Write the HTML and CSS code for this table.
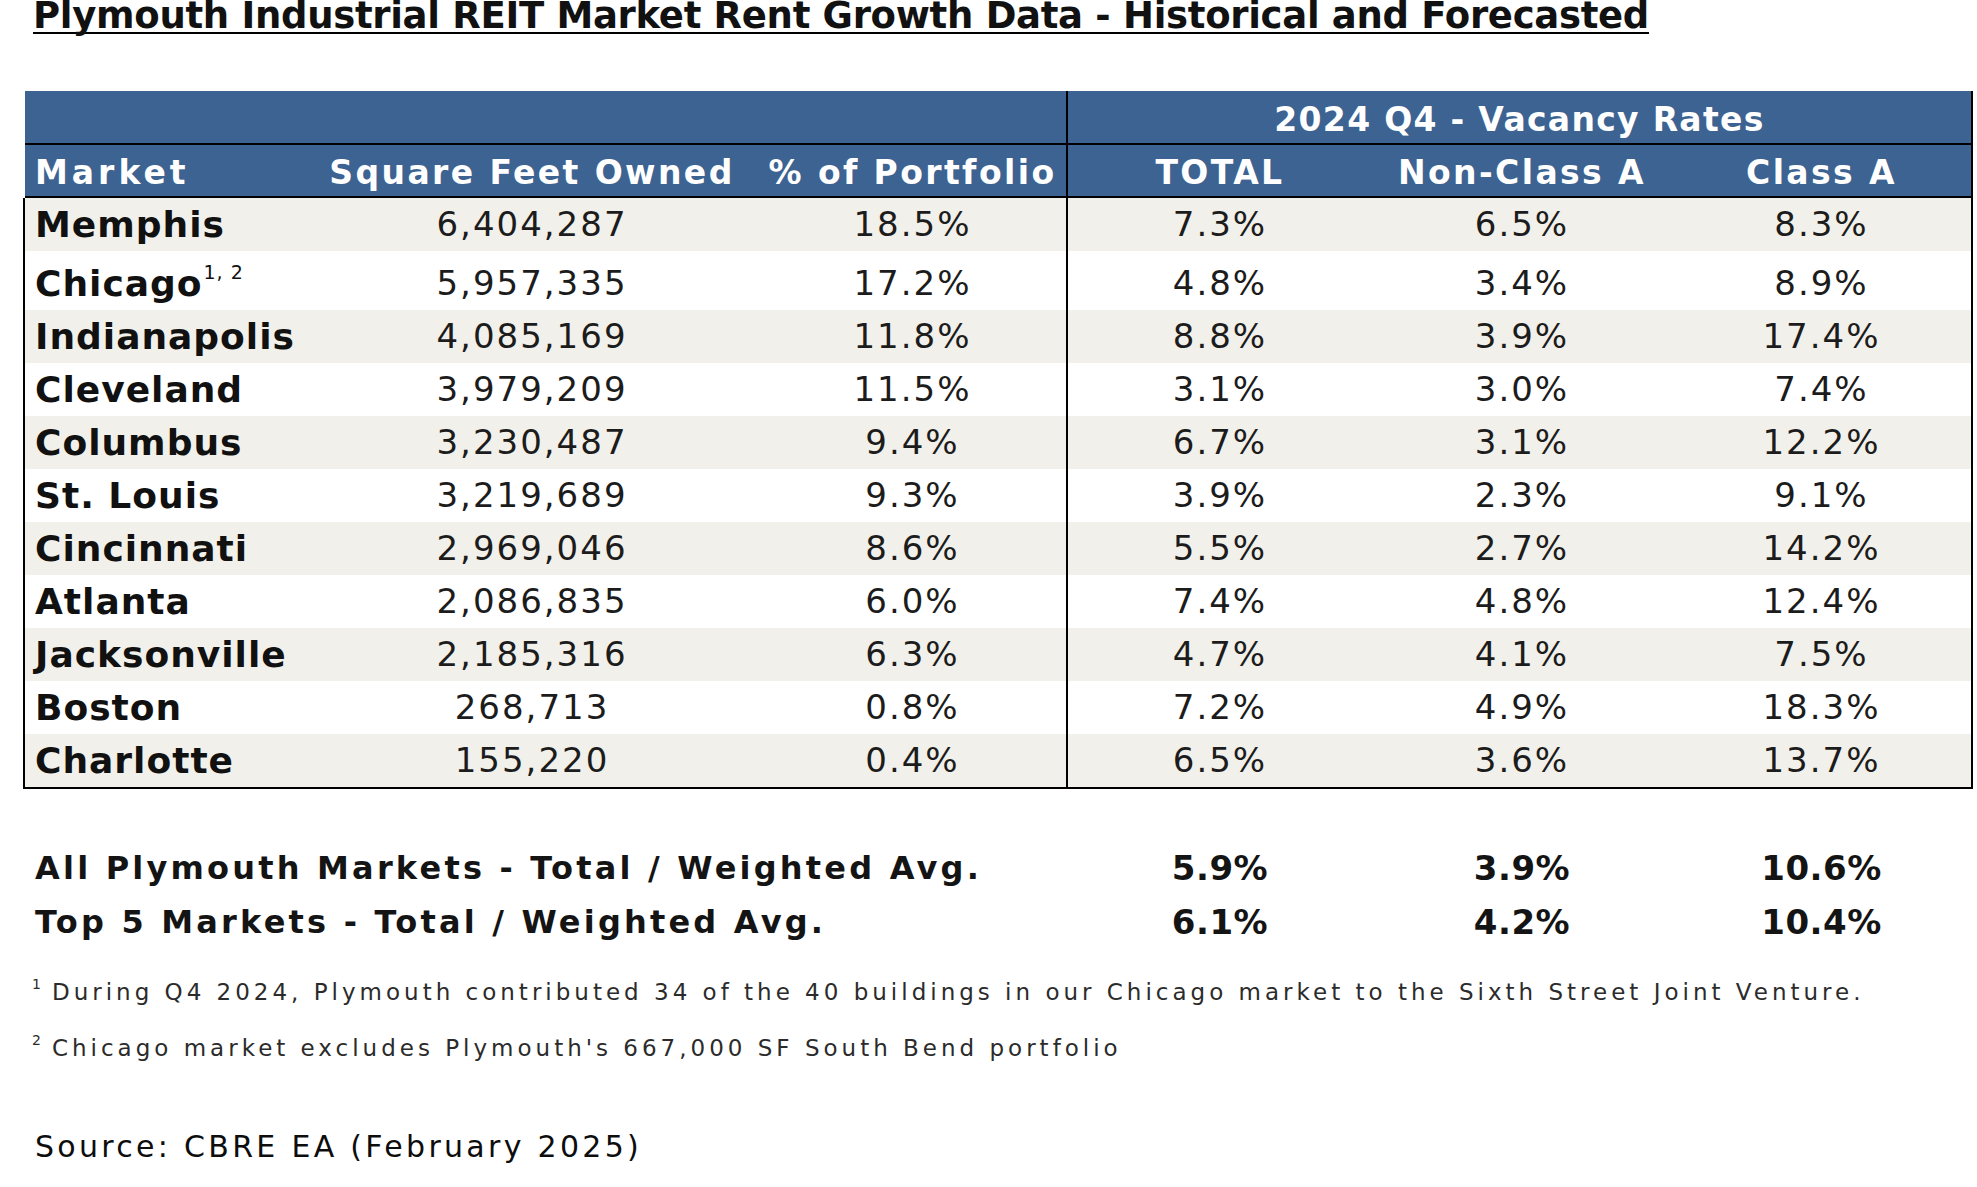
FILE: index.html
```html
<!DOCTYPE html>
<html lang="en">
<head>
<meta charset="utf-8">
<title>Plymouth Industrial REIT Market Rent Growth Data</title>
<link rel="stylesheet" href="styles.css">
</head>
<body>
<div class="page">
  <h1 class="title"><span>Plymouth Industrial REIT Market Rent Growth Data - Historical and Forecasted</span></h1>

  <div class="tbl">
    <div class="grid hrow hrow-top">
      <div class="hcell span3"></div>
      <div class="hcell span3 divider vac">2024 Q4 - Vacancy Rates</div>
    </div>
    <div class="grid hrow hrow-cols">
      <div class="hcell left">Market</div>
      <div class="hcell">Square Feet Owned</div>
      <div class="hcell">% of Portfolio</div>
      <div class="hcell divider">TOTAL</div>
      <div class="hcell">Non-Class A</div>
      <div class="hcell">Class A</div>
    </div>
    <div class="body">
      <div class="grid row shade">
        <div class="cell name">Memphis</div><div class="cell">6,404,287</div><div class="cell">18.5%</div>
        <div class="cell divider">7.3%</div><div class="cell">6.5%</div><div class="cell">8.3%</div>
      </div>
      <div class="grid row tall">
        <div class="cell name">Chicago<sup class="fn">1, 2</sup></div><div class="cell">5,957,335</div><div class="cell">17.2%</div>
        <div class="cell divider">4.8%</div><div class="cell">3.4%</div><div class="cell">8.9%</div>
      </div>
      <div class="grid row shade">
        <div class="cell name">Indianapolis</div><div class="cell">4,085,169</div><div class="cell">11.8%</div>
        <div class="cell divider">8.8%</div><div class="cell">3.9%</div><div class="cell">17.4%</div>
      </div>
      <div class="grid row">
        <div class="cell name">Cleveland</div><div class="cell">3,979,209</div><div class="cell">11.5%</div>
        <div class="cell divider">3.1%</div><div class="cell">3.0%</div><div class="cell">7.4%</div>
      </div>
      <div class="grid row shade">
        <div class="cell name">Columbus</div><div class="cell">3,230,487</div><div class="cell">9.4%</div>
        <div class="cell divider">6.7%</div><div class="cell">3.1%</div><div class="cell">12.2%</div>
      </div>
      <div class="grid row">
        <div class="cell name">St. Louis</div><div class="cell">3,219,689</div><div class="cell">9.3%</div>
        <div class="cell divider">3.9%</div><div class="cell">2.3%</div><div class="cell">9.1%</div>
      </div>
      <div class="grid row shade">
        <div class="cell name">Cincinnati</div><div class="cell">2,969,046</div><div class="cell">8.6%</div>
        <div class="cell divider">5.5%</div><div class="cell">2.7%</div><div class="cell">14.2%</div>
      </div>
      <div class="grid row">
        <div class="cell name">Atlanta</div><div class="cell">2,086,835</div><div class="cell">6.0%</div>
        <div class="cell divider">7.4%</div><div class="cell">4.8%</div><div class="cell">12.4%</div>
      </div>
      <div class="grid row shade">
        <div class="cell name">Jacksonville</div><div class="cell">2,185,316</div><div class="cell">6.3%</div>
        <div class="cell divider">4.7%</div><div class="cell">4.1%</div><div class="cell">7.5%</div>
      </div>
      <div class="grid row">
        <div class="cell name">Boston</div><div class="cell">268,713</div><div class="cell">0.8%</div>
        <div class="cell divider">7.2%</div><div class="cell">4.9%</div><div class="cell">18.3%</div>
      </div>
      <div class="grid row shade">
        <div class="cell name">Charlotte</div><div class="cell">155,220</div><div class="cell">0.4%</div>
        <div class="cell divider">6.5%</div><div class="cell">3.6%</div><div class="cell">13.7%</div>
      </div>
    </div>
  </div>

  <div class="summary">
    <div class="grid sum-row">
      <div class="sum-label">All Plymouth Markets - Total / Weighted Avg.</div>
      <div class="sum-val first">5.9%</div><div class="sum-val">3.9%</div><div class="sum-val">10.6%</div>
    </div>
    <div class="grid sum-row">
      <div class="sum-label">Top 5 Markets - Total / Weighted Avg.</div>
      <div class="sum-val first">6.1%</div><div class="sum-val">4.2%</div><div class="sum-val">10.4%</div>
    </div>
  </div>

  <div class="notes">
    <p class="note"><sup class="nmark">1</sup>During Q4 2024, Plymouth contributed 34 of the 40 buildings in our Chicago market to the Sixth Street Joint Venture.</p>
    <p class="note"><sup class="nmark">2</sup>Chicago market excludes Plymouth's 667,000 SF South Bend portfolio</p>
  </div>

  <p class="source">Source: CBRE EA (February 2025)</p>
</div>
</body>
</html>
```

FILE: styles.css
```css
body {
  margin: 0;
  background: #ffffff;
  font-family: "DejaVu Sans", "Verdana", sans-serif;
  color: #111111;
}

.page {
  width: 1977px;
}

.title {
  margin: 0 0 57px 33px;
  font-size: 37px;
  font-weight: 700;
  line-height: 32px;
}

.title span {
  display: inline-block;
  border-bottom: 2px solid #000000;
  white-space: nowrap;
  letter-spacing: -0.3px;
  color: #111111;
}

.tbl {
  margin-left: 23px;
  width: 1950px;
  box-sizing: border-box;
  border-right: 2px solid #000000;
}

.grid {
  display: grid;
  grid-template-columns: 280px 454px 307px 306px 300px 299px;
}

.hrow {
  margin-left: 2px;
  background: #3c6391;
  color: #ffffff;
  font-weight: 700;
  font-size: 33px;
  letter-spacing: 2.4px;
  border-bottom: 2px solid #000000;
  white-space: nowrap;
}

.hcell {
  text-align: center;
  padding-top: 5px;
}

.hrow-top .hcell {
  line-height: 47px;
}

.hrow-cols .hcell {
  line-height: 46px;
}

.hcell.left {
  text-align: left;
  padding-left: 10px;
  letter-spacing: 4px;
}

.hcell.vac {
  letter-spacing: 1.3px;
}

.span3 {
  grid-column: span 3;
}

.divider {
  border-left: 2px solid #000000;
}

.body {
  border-left: 2px solid #000000;
  border-bottom: 2px solid #000000;
}

.row {
  background: #ffffff;
}

.row.shade {
  background: #f2f0ea;
}

.cell {
  text-align: center;
  font-size: 34px;
  line-height: 53px;
  letter-spacing: 2px;
  color: #1c1c1c;
  white-space: nowrap;
}

.cell.name {
  text-align: left;
  padding-left: 10px;
  font-weight: 700;
  font-size: 36px;
  letter-spacing: 1px;
  color: #111111;
}

.row.tall .cell {
  padding-top: 6px;
}

.fn {
  font-size: 19px;
  font-weight: 400;
  line-height: 0;
  vertical-align: 17px;
  letter-spacing: 1px;
  margin-left: 1px;
}

.summary {
  margin: 52px 0 0 25px;
  width: 1946px;
}

.sum-label {
  grid-column: span 3;
  padding-left: 10px;
  font-weight: 700;
  font-size: 32px;
  line-height: 54px;
  letter-spacing: 3.2px;
  white-space: nowrap;
  color: #141414;
}

.sum-val {
  text-align: center;
  font-weight: 700;
  font-size: 34px;
  line-height: 54px;
  letter-spacing: 0.5px;
  color: #141414;
}

.sum-val.first {
  padding-left: 2px;
}

.notes {
  margin-top: 15px;
  padding-left: 32px;
}

.note {
  margin: 0;
  font-size: 23px;
  line-height: 56px;
  letter-spacing: 4px;
  color: #2b2b2b;
  white-space: nowrap;
}

.nmark {
  font-size: 14px;
  line-height: 0;
  vertical-align: 11px;
  margin-right: 11px;
  letter-spacing: 0;
}

.source {
  margin: 46px 0 0 35px;
  font-size: 30px;
  line-height: 50px;
  letter-spacing: 3.3px;
  color: #0d0d0d;
}
```
